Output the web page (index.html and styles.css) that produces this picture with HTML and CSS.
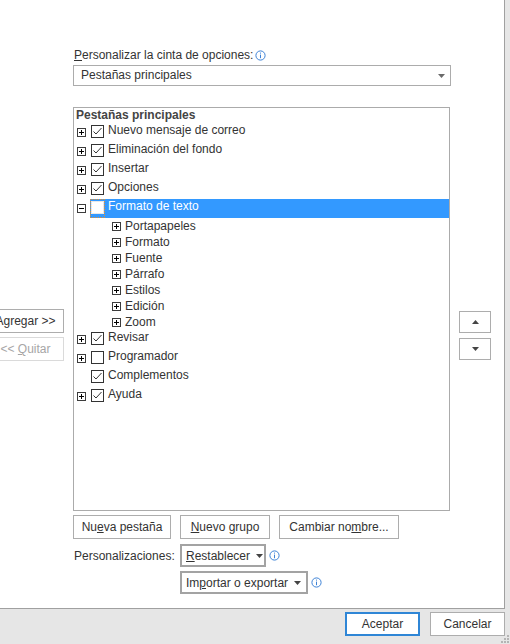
FILE: index.html
```html
<!DOCTYPE html>
<html lang="es">
<head>
<meta charset="utf-8">
<title>Personalizar cinta</title>
<link rel="stylesheet" href="styles.css">
</head>
<body>
<svg class="defs" width="0" height="0" aria-hidden="true">
  <defs>
    <symbol id="plus" viewBox="0 0 9 9"><rect x=".5" y=".5" width="8" height="8" fill="#fff" stroke="#3c3c3c"/><path d="M2 4.5h5M4.5 2v5" stroke="#000"/></symbol>
    <symbol id="minus" viewBox="0 0 9 9"><rect x=".5" y=".5" width="8" height="8" fill="#fff" stroke="#3c3c3c"/><path d="M2 4.5h5" stroke="#000"/></symbol>
    <symbol id="cbon" viewBox="0 0 13 13"><rect x=".5" y=".5" width="12" height="12" fill="#fff" stroke="#333"/><path d="M2.5 6.5l2.5 2.5 5.5-6" fill="none" stroke="#333"/></symbol>
    <symbol id="cboff" viewBox="0 0 13 13"><rect x=".5" y=".5" width="12" height="12" fill="#fff" stroke="#333"/></symbol>
    <symbol id="info" viewBox="0 0 11 11"><circle cx="5.5" cy="5.5" r="4.6" fill="none" stroke="#3d82d6"/><rect x="5" y="2.6" width="1" height="1" fill="#3d82d6"/><rect x="5" y="4.6" width="1" height="3.6" fill="#3d82d6"/></symbol>
    <symbol id="tridown" viewBox="0 0 7 4"><path d="M0 0h7L3.5 4z"/></symbol>
    <symbol id="triup" viewBox="0 0 7 4"><path d="M0 4h7L3.5 0z"/></symbol>
  </defs>
</svg>
<div class="window">
  <div class="panel">
    <div class="col-left">
      <button class="btn side-btn">Agregar &gt;&gt;</button>
      <button class="btn side-btn disabled">&lt;&lt; <u>Q</u>uitar</button>
    </div>
    <div class="col-center">
      <div class="label"><span><u>P</u>ersonalizar la cinta de opciones:</span><svg class="info"><use href="#info"/></svg></div>
      <div class="select"><span>Pestañas principales</span><svg class="sel-arrow"><use href="#tridown"/></svg></div>
      <div class="tree">
        <div class="tree-head">Pestañas principales</div>
        <div class="row"><svg class="exp"><use href="#plus"/></svg><svg class="cb"><use href="#cbon"/></svg><span class="txt">Nuevo mensaje de correo</span></div>
        <div class="row"><svg class="exp"><use href="#plus"/></svg><svg class="cb"><use href="#cbon"/></svg><span class="txt">Eliminación del fondo</span></div>
        <div class="row"><svg class="exp"><use href="#plus"/></svg><svg class="cb"><use href="#cbon"/></svg><span class="txt">Insertar</span></div>
        <div class="row"><svg class="exp"><use href="#plus"/></svg><svg class="cb"><use href="#cbon"/></svg><span class="txt">Opciones</span></div>
        <div class="row sel"><svg class="exp"><use href="#minus"/></svg><div class="sel-band"><span class="focus"><span class="cb-white"></span></span><span class="txt">Formato de texto</span></div></div>
        <div class="row child"><svg class="exp"><use href="#plus"/></svg><span class="txt">Portapapeles</span></div>
        <div class="row child"><svg class="exp"><use href="#plus"/></svg><span class="txt">Formato</span></div>
        <div class="row child"><svg class="exp"><use href="#plus"/></svg><span class="txt">Fuente</span></div>
        <div class="row child"><svg class="exp"><use href="#plus"/></svg><span class="txt">Párrafo</span></div>
        <div class="row child"><svg class="exp"><use href="#plus"/></svg><span class="txt">Estilos</span></div>
        <div class="row child"><svg class="exp"><use href="#plus"/></svg><span class="txt">Edición</span></div>
        <div class="row child"><svg class="exp"><use href="#plus"/></svg><span class="txt">Zoom</span></div>
        <div class="row"><svg class="exp"><use href="#plus"/></svg><svg class="cb"><use href="#cbon"/></svg><span class="txt">Revisar</span></div>
        <div class="row"><svg class="exp"><use href="#plus"/></svg><svg class="cb"><use href="#cboff"/></svg><span class="txt">Programador</span></div>
        <div class="row"><span class="exp-empty"></span><svg class="cb"><use href="#cbon"/></svg><span class="txt">Complementos</span></div>
        <div class="row"><svg class="exp"><use href="#plus"/></svg><svg class="cb"><use href="#cbon"/></svg><span class="txt">Ayuda</span></div>
      </div>
      <div class="btn-row">
        <button class="btn b-nueva">Nu<u>e</u>va pestaña</button>
        <button class="btn b-grupo"><u>N</u>uevo grupo</button>
        <button class="btn b-cambiar">Cambiar no<u>m</u>bre...</button>
      </div>
      <div class="custom-row">
        <span class="custom-label">Personalizaciones:</span>
        <button class="btn menu-btn b-rest"><span><u>R</u>establecer</span><svg class="menu-arrow"><use href="#tridown"/></svg></button>
        <svg class="info"><use href="#info"/></svg>
      </div>
      <div class="custom-row second">
        <button class="btn menu-btn b-imp"><span>Im<u>p</u>ortar o exportar</span><svg class="menu-arrow"><use href="#tridown"/></svg></button>
        <svg class="info"><use href="#info"/></svg>
      </div>
    </div>
    <div class="col-right">
      <button class="btn move-btn"><svg class="move-arrow"><use href="#triup"/></svg></button>
      <button class="btn move-btn"><svg class="move-arrow"><use href="#tridown"/></svg></button>
    </div>
  </div>
  <div class="footer">
    <button class="btn foot-btn primary">Aceptar</button>
    <button class="btn foot-btn">Cancelar</button>
  </div>
  <svg class="grip" width="8" height="8" viewBox="0 0 8 8"><g fill="#b4b4b4"><rect x="6" y="0" width="2" height="2"/><rect x="3" y="3" width="2" height="2"/><rect x="6" y="3" width="2" height="2"/><rect x="0" y="6" width="2" height="2"/><rect x="3" y="6" width="2" height="2"/><rect x="6" y="6" width="2" height="2"/></g></svg>
</div>
</body>
</html>
```

FILE: styles.css
```css
* { box-sizing: border-box; }

html, body {
  margin: 0;
  padding: 0;
}

body {
  width: 510px;
  height: 644px;
  overflow: hidden;
  background: #e6e6e6;
  font-family: "Liberation Sans", Arial, sans-serif;
  font-size: 12px;
  color: #333;
}

.defs { position: absolute; width: 0; height: 0; }

.window {
  position: relative;
  width: 510px;
  height: 644px;
}

.panel {
  display: flex;
  width: 505px;
  height: 609px;
  background: #fff;
  border-right: 1px solid #a0a0a0;
  border-bottom: 1px solid #a0a0a0;
  overflow: hidden;
}

u { text-decoration: underline; text-underline-offset: 1px; }

.btn {
  font-family: inherit;
  font-size: 12px;
  color: #333;
  background: #fff;
  border: 1px solid #adadad;
  padding: 0;
  margin: 0;
  height: 24px;
  line-height: 20px;
  white-space: nowrap;
}

/* left column */
.col-left {
  flex: none;
  width: 73px;
  padding-top: 309px;
  display: flex;
  flex-direction: column;
  gap: 4px;
}

.side-btn {
  margin-left: -13px;
  width: 77px;
}

.side-btn.disabled {
  color: #a6a6a6;
  border-color: #dadada;
}

/* center column */
.col-center {
  flex: none;
  width: 377px;
  padding-top: 48px;
  display: flex;
  flex-direction: column;
}

.label {
  display: flex;
  align-items: center;
  height: 15px;
  line-height: 15px;
  padding-left: 1px;
}

.info {
  width: 11px;
  height: 11px;
  flex: none;
  margin-left: 2px;
}

.select {
  margin-top: 2px;
  height: 21px;
  width: 378px;
  border: 1px solid #acacac;
  display: flex;
  align-items: center;
  justify-content: space-between;
  padding: 0 5px 0 7px;
  line-height: 19px;
}

.sel-arrow {
  width: 7px;
  height: 4px;
  fill: #6a6a6a;
}

.tree {
  margin-top: 21px;
  height: 404px;
  border: 1px solid #ababab;
}

.tree-head {
  height: 15px;
  line-height: 15px;
  padding-left: 2px;
  font-weight: bold;
  color: #444;
}

.row {
  display: flex;
  align-items: flex-start;
  height: 19px;
  padding-left: 3px;
}

.exp {
  flex: none;
  width: 9px;
  height: 9px;
  margin-top: 5px;
}

.exp-empty {
  flex: none;
  width: 9px;
  height: 9px;
}

.cb {
  flex: none;
  width: 13px;
  height: 13px;
  margin-left: 5px;
  margin-top: 2px;
}

.txt {
  margin-left: 4px;
  line-height: 15px;
  white-space: nowrap;
}

.row.child {
  height: 16px;
  padding-left: 38px;
}

.row.child .exp { margin-top: 4px; }
.row.child .txt { line-height: 16px; }

.sel-band {
  flex: 1;
  display: flex;
  align-items: flex-start;
  height: 19px;
  margin-left: 4px;
  background: #3399ff;
  color: #fff;
}

.focus {
  flex: none;
  width: 15px;
  height: 19px;
  border: 1px dotted #e5902f;
  padding-top: 1px;
}

.cb-white {
  display: block;
  width: 13px;
  height: 13px;
  background: #fff;
  border: 1px solid #e8e8e8;
}

.sel-band .txt { margin-left: 3px; }

/* bottom buttons */
.btn-row {
  display: flex;
  gap: 9px;
  margin-top: 4px;
}

.b-nueva { width: 98px; }
.b-grupo { width: 90px; }
.b-cambiar { width: 120px; }

.custom-row {
  display: flex;
  align-items: center;
  margin-top: 5px;
}

.custom-row.second {
  margin-top: 4px;
  padding-left: 107px;
}

.custom-label {
  width: 107px;
  padding-left: 1px;
}

.menu-btn {
  display: flex;
  align-items: center;
  height: 23px;
  border: 2px solid #a3a3a3;
  padding-left: 4px;
}

.b-rest { width: 86px; }
.b-imp { width: 128px; }

.menu-arrow {
  width: 7px;
  height: 4px;
  fill: #444;
  margin-left: 6px;
}

.custom-row .info { margin-left: 3px; }

/* right column */
.col-right {
  flex: none;
  padding-top: 311px;
  padding-left: 9px;
  display: flex;
  flex-direction: column;
  gap: 5px;
}

.move-btn {
  width: 32px;
  height: 22px;
  display: flex;
  align-items: center;
  justify-content: center;
}

.move-arrow {
  width: 7px;
  height: 4px;
  fill: #444;
}

/* footer */
.footer {
  display: flex;
  justify-content: flex-end;
  gap: 10px;
  padding: 3px 5px 0 0;
}

.foot-btn {
  width: 75px;
  height: 24px;
}

.foot-btn.primary {
  border: 2px solid #2f86d6;
}

.grip {
  position: absolute;
  right: 1px;
  bottom: 1px;
}
```
